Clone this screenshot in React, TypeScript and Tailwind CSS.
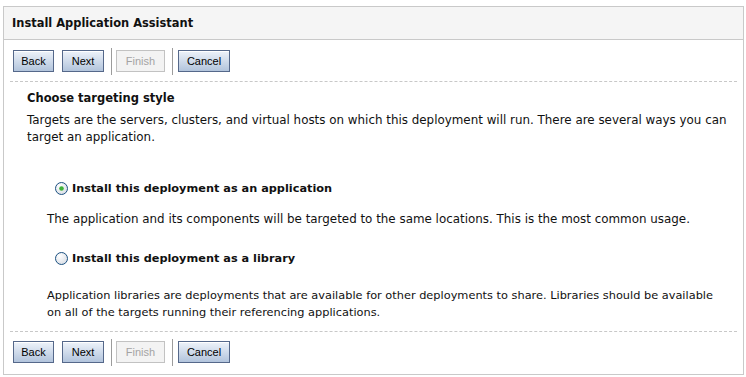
import React from 'react';

const font = { fontFamily: '"DejaVu Sans", Verdana, sans-serif' };

function Btn({ label, disabled, w }: { label: string; disabled?: boolean; w: string }) {
  const cls = disabled
    ? 'border-[#c2c2c2] bg-[#f3f3f3] text-[#a3a3a3]'
    : 'border-[#55688a] bg-gradient-to-b from-[#eef3fa] to-[#b2c4dc] text-black shadow-[inset_0_1px_0_#ffffff]';
  return (
    <button
      type="button"
      className={`h-[22px] ${w} flex items-center justify-center border text-[11px] leading-none font-['Liberation_Sans'] ${cls}`}
    >
      {label}
    </button>
  );
}

function Sep() {
  return <div className="w-px h-[27px] bg-[#9c9c9c]" />;
}

function ButtonRow() {
  return (
    <div className="flex items-center h-[22px] pl-[9px]">
      <Btn label="Back" w="w-[41px]" />
      <div className="w-[8px]" />
      <Btn label="Next" w="w-[42px]" />
      <div className="w-[7px]" />
      <Sep />
      <div className="w-[4px]" />
      <Btn label="Finish" w="w-[49px]" disabled />
      <div className="w-[7px]" />
      <Sep />
      <div className="w-[5px]" />
      <Btn label="Cancel" w="w-[52px]" />
    </div>
  );
}

function Radio({ checked }: { checked?: boolean }) {
  return (
    <svg width="13" height="13" viewBox="0 0 13 13" className="shrink-0">
      <defs>
        <radialGradient id={checked ? 'rg1' : 'rg2'} cx="0.35" cy="0.3" r="0.8">
          <stop offset="0" stopColor="#ffffff" />
          <stop offset="1" stopColor="#d6dbe3" />
        </radialGradient>
      </defs>
      <circle cx="6.5" cy="6.5" r="6" fill={`url(#${checked ? 'rg1' : 'rg2'})`} stroke="#1c5180" strokeWidth="1" />
      {checked && <circle cx="6.5" cy="6.5" r="2.3" fill="#3fb23a" />}
    </svg>
  );
}

export default function App() {
  return (
    <div className="w-[746px] h-[377px] bg-white pt-[6px] pl-[3px]" style={font}>
      <div className="w-[741px] h-[369px] border border-[#c9c9c9] flex flex-col">
        <div className="h-[33px] bg-[#f5f5f5] border-b border-[#c9c9c9] flex items-center pl-[8px] pt-[1px]">
          <span className="text-[11.45px] font-bold text-[#111]">Install Application Assistant</span>
        </div>

        <div className="pt-[10px]">
          <ButtonRow />
        </div>

        <div className="mx-[6px] mt-[9px] border-t border-dashed border-[#c8c8c8]" />

        <div className="pl-[23px] pr-[4px] text-[11.9px] text-[#111] leading-[17px] whitespace-nowrap">
          <div className="mt-[8px] font-bold text-[11.5px]">Choose targeting style</div>
          <p className="mt-[5px]">
            Targets are the servers, clusters, and virtual hosts on which this deployment will run. There are several ways you can
            <br />
            target an application.
          </p>

          <div className="mt-[34px] pl-[28px] flex items-center gap-[4px] font-bold text-[11.3px]">
            <Radio checked />
            <span>Install this deployment as an application</span>
          </div>
          <p className="mt-[14px] pl-[20px]">
            The application and its components will be targeted to the same locations. This is the most common usage.
          </p>

          <div className="mt-[22px] pl-[28px] flex items-center gap-[4px] font-bold text-[11.3px]">
            <Radio />
            <span>Install this deployment as a library</span>
          </div>
          <p className="mt-[20px] pl-[20px] text-[11.35px]">
            Application libraries are deployments that are available for other deployments to share. Libraries should be available
            <br />
            on all of the targets running their referencing applications.
          </p>
        </div>

        <div className="mx-[6px] mt-[10px] border-t border-dashed border-[#c8c8c8]" />

        <div className="pt-[9px]">
          <ButtonRow />
        </div>
      </div>
    </div>
  );
}
